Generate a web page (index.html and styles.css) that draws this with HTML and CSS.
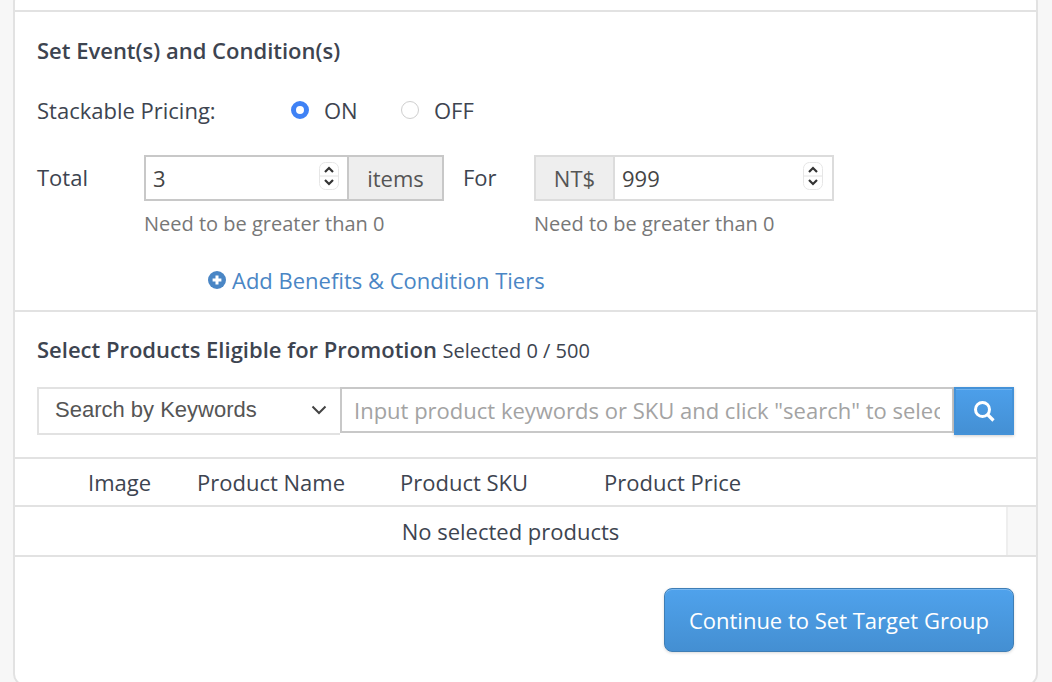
FILE: index.html
```html
<!DOCTYPE html>
<html lang="en">
<head>
<meta charset="utf-8">
<title>Set Event(s) and Condition(s)</title>
<link rel="stylesheet" href="styles.css">
</head>
<body>
<main class="card">
  <section class="events">
    <h2 class="heading">Set Event(s) and Condition(s)</h2>
    <div class="stack-row">
      <span class="stack-label">Stackable Pricing:</span>
      <span class="radio radio-on"></span><span class="radio-text on-text">ON</span>
      <span class="radio"></span><span class="radio-text">OFF</span>
    </div>
    <div class="cond-row">
      <span class="total-label">Total</span>
      <div class="field-col first-col">
        <div class="group">
          <div class="num num-first">3<svg class="spin" viewBox="0 0 20 28"><use href="#spinner"/></svg></div>
          <div class="addon addon-right">items</div>
        </div>
        <p class="hint">Need to be greater than 0</p>
      </div>
      <span class="for-label">For</span>
      <div class="field-col">
        <div class="group group-light">
          <div class="addon addon-left">NT$</div>
          <div class="num">999<svg class="spin" viewBox="0 0 20 28"><use href="#spinner"/></svg></div>
        </div>
        <p class="hint">Need to be greater than 0</p>
      </div>
    </div>
    <a class="add-link" href="#">
      <svg class="plus" viewBox="0 0 18 18"><circle cx="9" cy="9" r="9" fill="#4a86c5"/><path d="M9 4.6v8.8M4.6 9h8.8" stroke="#fff" stroke-width="3"/></svg>Add Benefits &amp; Condition Tiers
    </a>
  </section>
  <section class="products">
    <h2 class="heading prod-heading">Select Products Eligible for Promotion <span class="selected">Selected 0 / 500</span></h2>
    <div class="search-row">
      <div class="select">Search by Keywords<svg class="chev" viewBox="0 0 16 10"><path d="M1.5 1.5 8 8l6.5-6.5" fill="none" stroke="#444" stroke-width="2"/></svg></div>
      <input class="keyword" type="text" placeholder="Input product keywords or SKU and click &quot;search&quot; to select">
      <button class="search-btn" type="button" aria-label="search"><svg viewBox="0 0 22 22" class="mag"><circle cx="9.5" cy="9.5" r="7" fill="none" stroke="#fff" stroke-width="3"/><path d="m14.5 14.5 6 6" stroke="#fff" stroke-width="3.2"/></svg></button>
    </div>
    <div class="thead">
      <span class="th th-image">Image</span>
      <span class="th th-name">Product Name</span>
      <span class="th th-sku">Product SKU</span>
      <span class="th">Product Price</span>
    </div>
    <div class="tbody">
      <div class="empty">No selected products</div>
      <div class="scroll"></div>
    </div>
  </section>
  <footer class="foot">
    <button class="continue" type="button">Continue to Set Target Group</button>
  </footer>
</main>
<svg class="defs" width="0" height="0" aria-hidden="true">
  <symbol id="spinner" viewBox="0 0 20 28">
    <rect x=".5" y=".5" width="19" height="27" rx="6" fill="#fff" stroke="#e6e6e6"/>
    <path d="M1 14h18" stroke="#e2e2e2"/>
    <path d="m6 10 4-4 4 4M6 18l4 4 4-4" fill="none" stroke="#333" stroke-width="2.2"/>
  </symbol>
</svg>
</body>
</html>
```
FILE: styles.css
```css
* { box-sizing: border-box; }
html, body { height: 682px; overflow: hidden; }
body {
  margin: 0;
  background: #f7f7f7;
  font-family: "Open Sans", sans-serif;
  font-size: 22px;
  color: #3d4450;
}
.defs { position: absolute; }
.card {
  width: 1025px;
  height: 696px;
  margin-left: 13px;
  margin-top: -10px;
  background: #fff;
  border: 2px solid #e2e2e2;
  border-radius: 12px;
}
.events {
  height: 302px;
  margin-top: 18px;
  padding: 0 0 0 22px;
  border-top: 2px solid #e2e2e2;
  border-bottom: 2px solid #e2e2e2;
}
.heading { margin: 0; font-size: 22px; line-height: 30px; font-weight: 600; color: #3d4450; }
.events .heading { margin-top: 23px; }
.stack-row { display: flex; align-items: center; height: 30px; margin-top: 30px; }
.stack-label { width: 254px; }
.radio {
  width: 18px; height: 18px; border-radius: 50%;
  background: #fff; border: 1px solid #cfcfcf;
}
.radio-on { background: #fff; border: 5px solid #3f82f5; width: 18px; height: 18px; }
.radio-text { margin-left: 15px; }
.on-text { width: 77px; }
.cond-row { display: flex; margin-top: 30px; }
.total-label { width: 107px; line-height: 44px; }
.field-col { display: flex; flex-direction: column; }
.first-col { width: 300px; }
.for-label { width: 71px; margin-left: 19px; line-height: 44px; }
.group { display: flex; width: 300px; height: 46px; border: 2px solid #c8c8c8; }
.group-light { border-color: #dcdcdc; }
.num {
  flex: 1; display: flex; align-items: center; justify-content: space-between;
  padding: 0 9px 0 7px; background: #fff; font-size: 22px; line-height: 1; color: #444;
}
.num-first { padding-right: 8px; }
.spin { width: 20px; height: 28px; margin-top: -4px; }
.addon {
  display: flex; align-items: center; justify-content: center;
  background: #eee; color: #555; font-size: 22px;
}
.addon-right { width: 95px; border-left: 2px solid #c8c8c8; }
.addon-left { width: 79px; border-right: 2px solid #dcdcdc; }
.hint { margin: 10px 0 0; font-size: 20px; line-height: 26px; color: #777; }
.add-link {
  display: flex; align-items: center; gap: 6px;
  margin: 28px 0 0 171px; height: 30px;
  color: #4a86c5; font-size: 22px; text-decoration: none;
}
.plus { width: 18px; height: 18px; }
.products { padding: 0; }
.prod-heading { margin: 22px 0 0 22px; }
.selected { font-size: 20px; font-weight: 400; }
.search-row { display: flex; align-items: flex-start; margin: 21px 22px 0 22px; height: 48px; }
.select {
  display: flex; align-items: center; justify-content: space-between;
  width: 303px; height: 48px; padding: 0 13px 3px 16px;
  border: 2px solid #e2e2e2; border-right: 0;
  font-family: "Liberation Sans", sans-serif; font-size: 22px; color: #555;
}
.chev { width: 16px; height: 10px; margin-right: 0; }
.keyword {
  flex: 1; min-width: 0; height: 46px; padding: 0 12px;
  border: 2px solid #c8c8c8; outline: 0;
  font-family: "Open Sans", sans-serif; font-size: 22px; color: #555;
}
.keyword::placeholder { color: #a3a3a3; opacity: 1; }
.search-btn {
  display: flex; align-items: center; justify-content: center;
  width: 60px; height: 48px; padding: 0;
  border: 2px solid #4492d8;
  background: linear-gradient(#4c9fea, #4490d4);
  box-shadow: inset 0 1px 0 rgba(255,255,255,.2), 0 1px 3px rgba(0,0,0,.2);
}
.mag { width: 22px; height: 22px; }
.thead {
  display: flex; align-items: center; height: 50px; margin-top: 22px;
  border-top: 2px solid #e2e2e2; border-bottom: 2px solid #e2e2e2;
  font-size: 22px;
}
.th-image { margin-left: 73px; width: 109px; }
.th-name { width: 203px; }
.th-sku { width: 204px; }
.tbody {
  display: flex; height: 50px;
  border-bottom: 2px solid #e2e2e2;
}
.empty {
  flex: 1; display: flex; align-items: center; justify-content: center;
  font-size: 22px; border-right: 2px solid #eee;
}
.scroll { width: 28px; background: #f8f8f8; }
.foot { display: flex; justify-content: flex-end; padding: 31px 22px 0 0; }
.continue {
  width: 350px; height: 64px; padding: 0;
  border: 1px solid #3f7eb5; border-radius: 8px;
  background: linear-gradient(#4fa2ec, #448fd2);
  box-shadow: inset 0 1px 0 rgba(255,255,255,.25), 0 1px 3px rgba(0,0,0,.15);
  color: #fff; font-family: "Open Sans", sans-serif; font-size: 22px;
}
```
